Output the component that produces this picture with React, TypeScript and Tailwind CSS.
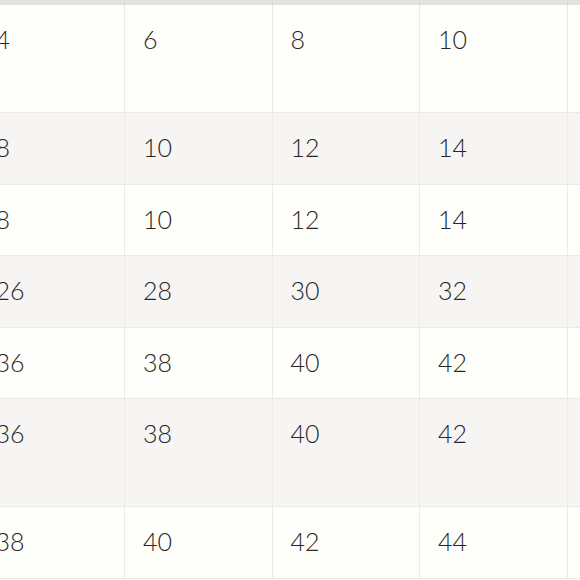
import React from 'react';

const rows: { cells: string[]; tall?: boolean }[] = [
  { cells: ['4', '6', '8', '10', ''], tall: true },
  { cells: ['8', '10', '12', '14', ''] },
  { cells: ['8', '10', '12', '14', ''] },
  { cells: ['26', '28', '30', '32', ''] },
  { cells: ['36', '38', '40', '42', ''] },
  { cells: ['36', '38', '40', '42', ''], tall: true },
  { cells: ['38', '40', '42', '44', ''] },
];

const App: React.FC = () => {
  return (
    <div className="w-[580px] h-[580px] overflow-hidden bg-[#fefefa]">
      <div className="ml-[-22.5px] w-[737.5px] font-['Lato',sans-serif] font-light text-[25px] leading-[36px] text-[#262626]">
        {/* header row, only its bottom edge shows */}
        <div className="grid grid-cols-[repeat(5,147.5px)] h-[5px] bg-[#e6e2df]">
          {[0, 1, 2, 3, 4].map(i => (
            <div key={i} className="border-r border-[#dedad6]" />
          ))}
        </div>

        {rows.map((row, r) => (
          <div
            key={r}
            className={`grid grid-cols-[repeat(5,147.5px)] border-b border-[#ebeae6] ${
              r % 2 === 1 ? 'bg-[#f6f5f3]' : 'bg-[#fefefa]'
            } ${row.tall ? 'h-[108px]' : 'h-[71.5px]'}`}
          >
            {row.cells.map((c, i) => (
              <div key={i} className="border-r border-[#ebeae6] pl-[18px] pt-[16px]">
                {c}
              </div>
            ))}
          </div>
        ))}
      </div>
    </div>
  );
};

export default App;
